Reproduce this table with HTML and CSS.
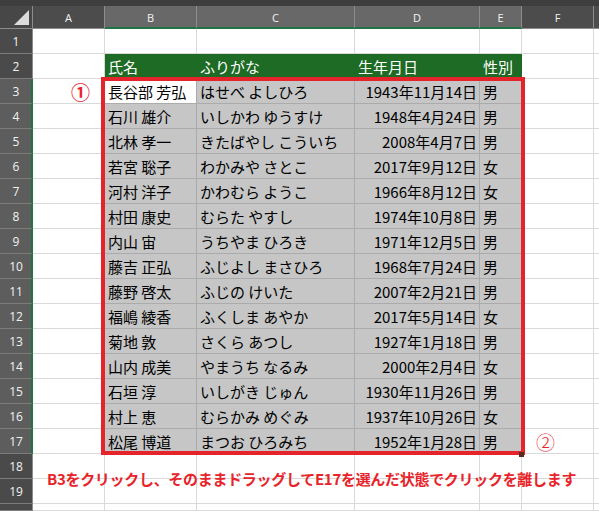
FILE: index.html
```html
<!DOCTYPE html>
<html lang="ja">
<head>
<meta charset="utf-8">
<title>選択範囲</title>
<link rel="stylesheet" href="styles.css">
</head>
<body>
<div class="topband"></div>
<div class="sheet">
  <div class="ch corner"><svg width="32" height="22" viewBox="0 0 32 22"><polygon points="14,19 29,19 29,4" fill="#dcdcdc"/></svg></div>
  <div class="ch">A</div><div class="ch on">B</div><div class="ch on">C</div><div class="ch on">D</div><div class="ch on">E</div><div class="ch">F</div><div class="ch last"></div>

  <div class="rh">1</div><div class="c"></div><div class="c"></div><div class="c"></div><div class="c"></div><div class="c"></div><div class="c"></div><div class="c g"></div>

  <div class="rh">2</div><div class="c"></div><div class="c hd">氏名</div><div class="c hd">ふりがな</div><div class="c hd">生年月日</div><div class="c hd">性別</div><div class="c"></div><div class="c g"></div>

  <div class="rh on">3</div><div class="c mark"><span class="m1">①</span></div><div class="c act">長谷部 芳弘</div><div class="c s">はせべ よしひろ</div><div class="c s r">1943年11月14日</div><div class="c s">男</div><div class="c"></div><div class="c g"></div>
  <div class="rh on">4</div><div class="c"></div><div class="c s">石川 雄介</div><div class="c s">いしかわ ゆうすけ</div><div class="c s r">1948年4月24日</div><div class="c s">男</div><div class="c"></div><div class="c g"></div>
  <div class="rh on">5</div><div class="c"></div><div class="c s">北林 孝一</div><div class="c s">きたばやし こういち</div><div class="c s r">2008年4月7日</div><div class="c s">男</div><div class="c"></div><div class="c g"></div>
  <div class="rh on">6</div><div class="c"></div><div class="c s">若宮 聡子</div><div class="c s">わかみや さとこ</div><div class="c s r">2017年9月12日</div><div class="c s">女</div><div class="c"></div><div class="c g"></div>
  <div class="rh on">7</div><div class="c"></div><div class="c s">河村 洋子</div><div class="c s">かわむら ようこ</div><div class="c s r">1966年8月12日</div><div class="c s">女</div><div class="c"></div><div class="c g"></div>
  <div class="rh on">8</div><div class="c"></div><div class="c s">村田 康史</div><div class="c s">むらた やすし</div><div class="c s r">1974年10月8日</div><div class="c s">男</div><div class="c"></div><div class="c g"></div>
  <div class="rh on">9</div><div class="c"></div><div class="c s">内山 宙</div><div class="c s">うちやま ひろき</div><div class="c s r">1971年12月5日</div><div class="c s">男</div><div class="c"></div><div class="c g"></div>
  <div class="rh on">10</div><div class="c"></div><div class="c s">藤吉 正弘</div><div class="c s">ふじよし まさひろ</div><div class="c s r">1968年7月24日</div><div class="c s">男</div><div class="c"></div><div class="c g"></div>
  <div class="rh on">11</div><div class="c"></div><div class="c s">藤野 啓太</div><div class="c s">ふじの けいた</div><div class="c s r">2007年2月21日</div><div class="c s">男</div><div class="c"></div><div class="c g"></div>
  <div class="rh on">12</div><div class="c"></div><div class="c s">福嶋 綾香</div><div class="c s">ふくしま あやか</div><div class="c s r">2017年5月14日</div><div class="c s">女</div><div class="c"></div><div class="c g"></div>
  <div class="rh on">13</div><div class="c"></div><div class="c s">菊地 敦</div><div class="c s">さくら あつし</div><div class="c s r">1927年1月18日</div><div class="c s">男</div><div class="c"></div><div class="c g"></div>
  <div class="rh on">14</div><div class="c"></div><div class="c s">山内 成美</div><div class="c s">やまうち なるみ</div><div class="c s r">2000年2月4日</div><div class="c s">女</div><div class="c"></div><div class="c g"></div>
  <div class="rh on">15</div><div class="c"></div><div class="c s">石垣 淳</div><div class="c s">いしがき じゅん</div><div class="c s r">1930年11月26日</div><div class="c s">男</div><div class="c"></div><div class="c g"></div>
  <div class="rh on">16</div><div class="c"></div><div class="c s">村上 恵</div><div class="c s">むらかみ めぐみ</div><div class="c s r">1937年10月26日</div><div class="c s">女</div><div class="c"></div><div class="c g"></div>
  <div class="rh on">17</div><div class="c"></div><div class="c s">松尾 博道</div><div class="c s">まつお ひろみち</div><div class="c s r">1952年1月28日</div><div class="c s">男</div><div class="c m2cell"><span class="m2">②</span></div><div class="c g"></div>

  <div class="rh">18</div><div class="c"></div><div class="c"></div><div class="c"></div><div class="c"></div><div class="c"></div><div class="c"></div><div class="c g"></div>
  <div class="rh">19</div><div class="c"></div><div class="c"></div><div class="c"></div><div class="c"></div><div class="c"></div><div class="c"></div><div class="c g"></div>
  <div class="rh tail"></div><div class="c"></div><div class="c"></div><div class="c"></div><div class="c"></div><div class="c"></div><div class="c"></div><div class="c g"></div>

  <div class="selbox"></div>
  <div class="handle"></div>
  <div class="note">B3をクリックし、そのままドラッグしてE17を選んだ状態でクリックを離します</div>
</div>
</body>
</html>
```
FILE: styles.css
```css
html, body {
  margin: 0;
  padding: 0;
  background: #ffffff;
  overflow: hidden;
  width: 599px;
  height: 511px;
}
body {
  font-family: "Noto Sans CJK JP", "Noto Sans", sans-serif;
}
.topband {
  height: 6px;
  background: #3e3e3e;
}
.sheet {
  position: relative;
  display: grid;
  grid-template-columns: 33px 72px 92px 158px 125px 42px 72px 5px;
  grid-template-rows: 23px repeat(19, 25px) 7px;
}
.sheet > div {
  box-sizing: border-box;
}
.ch {
  background: #4c4c4c;
  color: #f2f2f2;
  font-family: "Open Sans", "Noto Sans", sans-serif;
  font-size: 11px;
  display: flex;
  align-items: center;
  justify-content: center;
  border-right: 1px solid #8c8c8c;
  border-bottom: 1px solid #8c8c8c;
  padding-top: 1px;
}
.ch.on {
  background: #686868;
  border-bottom: 2px solid #217346;
  padding-top: 2px;
}
.ch.corner {
  background: #474747;
  padding: 0;
  align-items: flex-start;
}
.ch.corner svg { display: block; }
.ch.last { border-right: none; }
.rh {
  background: #4a4a4a;
  color: #f2f2f2;
  font-family: "Open Sans", "Noto Sans", sans-serif;
  font-size: 12px;
  display: flex;
  align-items: center;
  justify-content: center;
  border-right: 1px solid #8c8c8c;
  border-bottom: 1px solid #7c7c7c;
}
.rh.on {
  background: #5d5d5d;
  border-right: 2px solid #217346;
  padding-left: 1px;
}
.c {
  border-right: 1px solid #d9d9d9;
  border-bottom: 1px solid #d9d9d9;
  font-size: 15px;
  color: #000;
  display: flex;
  align-items: center;
  padding-left: 3px;
  white-space: nowrap;
  overflow: visible;
}
.c.g { border-right: none; }
.c.hd {
  background: #1d6b24;
  color: #ffffff;
  border-right-color: #1d6b24;
}
.c.s {
  background: #c6c6c6;
  border-right-color: #ababab;
  border-bottom-color: #ababab;
}
.c.act {
  background: #ffffff;
  border-right-color: #ababab;
  border-bottom-color: #ababab;
}
.c.r {
  justify-content: flex-end;
  padding-right: 2px;
}
.c.mark {
  justify-content: flex-end;
  padding-right: 14px;
}
.m1 {
  color: #e8242b;
  font-size: 19px;
  font-weight: 700;
  line-height: 1;
}
.m2cell { padding-left: 14px; }
.m2 {
  color: #e8242b;
  font-size: 19px;
  font-weight: 300;
  line-height: 1;
}
.selbox {
  position: absolute;
  left: 101px;
  top: 71px;
  width: 424px;
  height: 378px;
  border: 4px solid #e5232a;
  box-sizing: border-box;
  pointer-events: none;
}
.handle {
  position: absolute;
  left: 519px;
  top: 446px;
  width: 5px;
  height: 5px;
  background: #5a2a1e;
}
.note {
  position: absolute;
  left: 47px;
  top: 463px;
  line-height: 20px;
  font-size: 15px;
  font-weight: 700;
  color: #e8232a;
  letter-spacing: -0.3px;
  white-space: nowrap;
}
```
